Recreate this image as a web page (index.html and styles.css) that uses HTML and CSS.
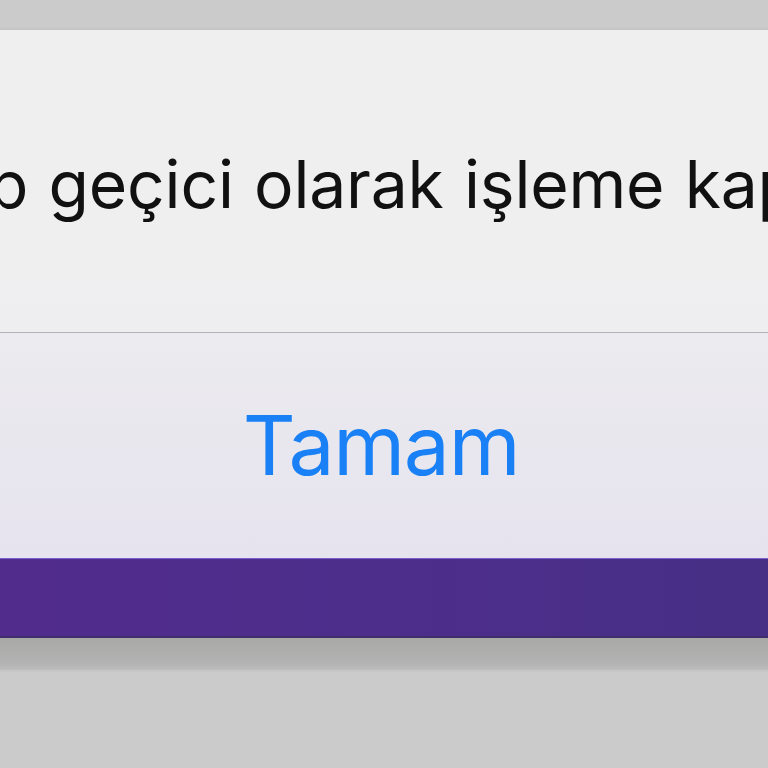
FILE: index.html
```html
<!DOCTYPE html>
<html lang="tr">
<head>
<meta charset="utf-8">
<title>Uyarı</title>
<link rel="stylesheet" href="styles.css">
</head>
<body>
<div class="screen">
  <div class="backdrop-top"></div>
  <div class="alert">
    <div class="alert-message">
      <p class="message-text">olup geçici olarak işleme kapatılmıştır</p>
    </div>
    <div class="alert-divider"></div>
    <div class="alert-action">
      <button class="action-button" type="button">Tamam</button>
    </div>
  </div>
  <div class="tabbar"></div>
  <div class="tabbar-shadow"></div>
  <div class="backdrop-bottom"></div>
</div>
</body>
</html>
```
FILE: styles.css
```css
* {
  box-sizing: border-box;
}

html, body {
  margin: 0;
  padding: 0;
  background: #cbcbcb;
}

.screen {
  width: 768px;
  height: 768px;
  overflow: hidden;
  display: flex;
  flex-direction: column;
  font-family: "Inter", "Liberation Sans", sans-serif;
}

.backdrop-top {
  height: 30px;
  flex: none;
  background: linear-gradient(#cbcbcb 0, #cbcbcb 27px, #c2c2c2 30px);
}

.alert {
  flex: none;
  display: flex;
  flex-direction: column;
}

.alert-message {
  height: 302px;
  background: linear-gradient(#efefef, #efefef 70%, #eeedf0);
  display: flex;
  align-items: center;
  overflow: hidden;
}

.message-text {
  margin: 0 0 0 -106px;
  padding-top: 6px;
  white-space: nowrap;
  font-size: 66px;
  font-weight: 400;
  color: #111111;
  letter-spacing: -0.2px;
  word-spacing: 2px;
}

.alert-divider {
  height: 1px;
  background: #b3b2b7;
}

.alert-action {
  height: 225px;
  background: linear-gradient(#ecebef, #e8e6ee 60%, #e6e3ee);
  display: flex;
  align-items: center;
  justify-content: center;
}

.action-button {
  border: 0;
  background: none;
  padding: 0;
  margin: 0 6px 0 0;
  font-family: inherit;
  font-size: 82px;
  font-weight: 400;
  letter-spacing: -1.2px;
  color: #1a80f6;
  line-height: 1;
}

.tabbar {
  height: 80px;
  flex: none;
  background: linear-gradient(90deg, #512c8d 0%, #4d2e8b 50%, #472f85 100%);
  border-top: 1px solid #7d5ed0;
  border-bottom: 2px solid #3f2d6c;
}

.tabbar-shadow {
  height: 32px;
  flex: none;
  background: linear-gradient(#a9a9a6, #b3b3b4 80%, #bdbdbd);
}

.backdrop-bottom {
  flex: 1;
  background: #cbcbcb;
  border-top: 2px solid #c6c6c6;
}
```
